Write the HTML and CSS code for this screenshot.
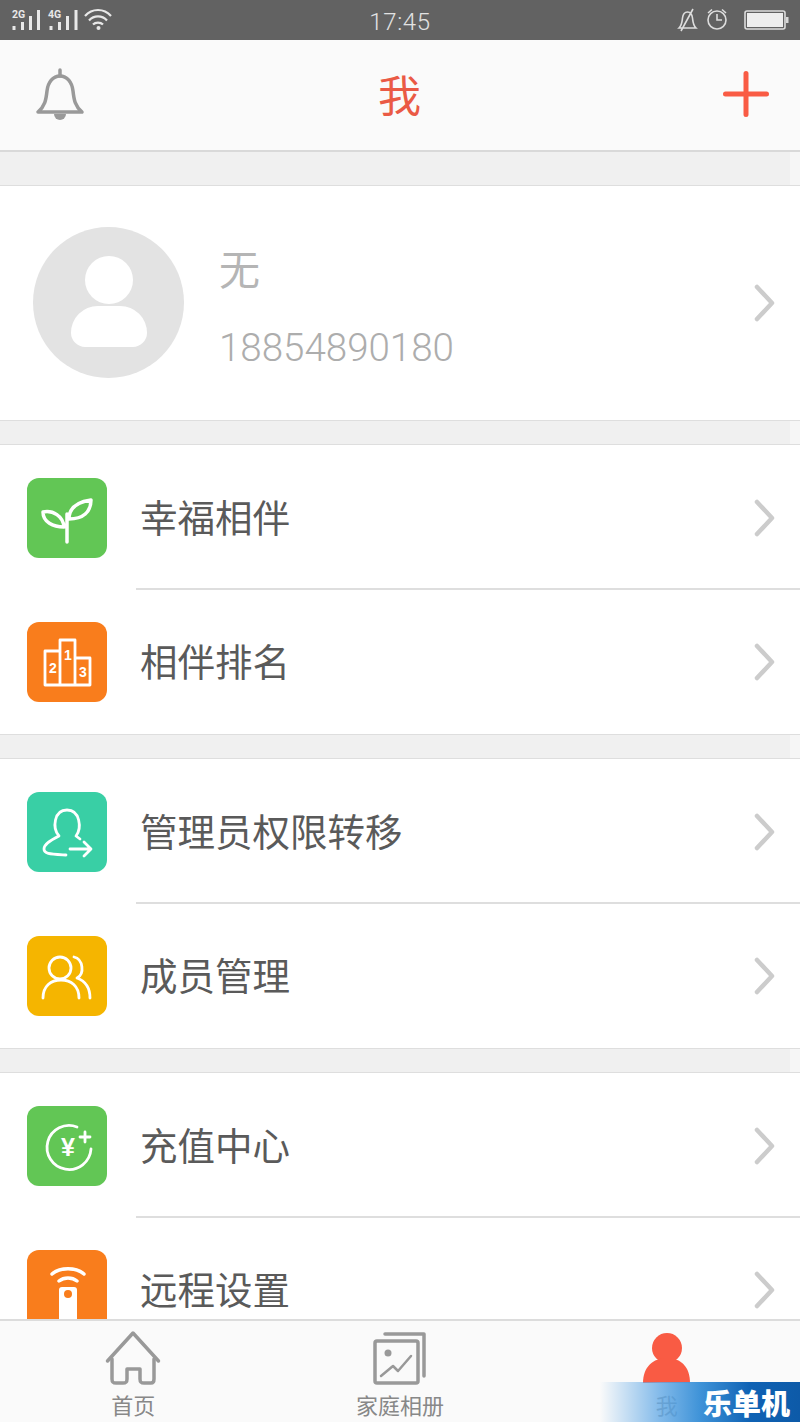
FILE: index.html
```html
<!DOCTYPE html>
<html>
<head>
    <title>我</title>
    <link rel="stylesheet" href="styles.css">
</head>
<body>
    <div class="status-bar">
        <div class="status-left">
            <svg width="116" height="40" viewBox="0 0 116 40">
                <text class="net" x="12" y="18">2G</text>
                <path class="bars" d="M14 26v4M22.500 22v8M30.500 16v14M38.500 10v20"/>
                <text class="net" x="48" y="18">4G</text>
                <path class="bars" d="M51 26v4M59.500 22v8M67.500 16v14M76 10v20"/>
                <path class="wifi" d="M86 17C93 9 105 9 112 17M90 21.500C95 16 103 16 108 21.500M94 25.500C96.500 23 101.500 23 104 25.500" transform="translate(-1 -1)"/>
                <circle cx="98.500" cy="28" r="2" fill="#e8e8e8"/>
            </svg>
        </div>
        <div class="status-time">17:45</div>
        <div class="status-right">
            <svg width="130" height="40" viewBox="0 0 130 40">
                <path class="thin" d="M9 28c3-3 3-6 3.500-10 .5-4 2.500-6 5-6s4.500 2 5 6c.5 4 .5 7 3.500 10zM11 31L23 9"/>
                <circle class="thin" cx="47" cy="20" r="9"/>
                <path class="thin" d="M47 14v6h5M38 13l4-3.500M56 13l-4-3.500"/>
                <rect class="thin" x="75" y="11" width="40" height="18" rx="2"/>
                <rect x="77" y="13" width="36" height="14" fill="#eeeeee"/>
                <rect x="116" y="17" width="2.500" height="6" fill="#d8d8d8"/>
            </svg>
        </div>
    </div>

    <div class="top-bar">
        <svg class="top-icon" width="60" height="60" viewBox="0 0 60 60">
            <path class="bell" d="M8 47c7-6 8-12 9-21 1-9 6-15 13-15s12 6 13 15c1 9 2 15 9 21z"/>
            <path class="bell" d="M30 5v6"/>
            <path class="bell-clap" d="M24 49a6 6 0 0 0 12 0z"/>
        </svg>
        <div class="top-title">我</div>
        <svg class="top-icon top-plus" width="60" height="60" viewBox="0 0 60 60">
            <path class="plus" d="M9.500 29h41M30 8.500v41"/>
        </svg>
    </div>

    <div class="content">
        <div class="gap"></div>

        <div class="section profile">
            <div class="avatar">
                <div class="avatar-head"></div>
                <div class="avatar-body"></div>
            </div>
            <div class="profile-info">
                <div class="profile-name">无</div>
                <div class="profile-phone">18854890180</div>
            </div>
            <svg class="chevron" width="24" height="40" viewBox="0 0 24 40"><path d="M4 4l15 16L4 36"/></svg>
        </div>

        <div class="gap"></div>

        <div class="section">
            <div class="row">
                <div class="tile green">
                    <svg width="80" height="80" viewBox="0 0 80 80">
                        <path class="line" d="M40 64V36M42 41C42 30 50 24 64 22C64 34 56 41 42 41ZM16 34C26 32 36 38 37 49C26 49 16 44 16 34Z"/>
                    </svg>
                </div>
                <div class="row-body">
                    <span class="row-label">幸福相伴</span>
                    <svg class="chevron" width="24" height="40" viewBox="0 0 24 40"><path d="M4 4l15 16L4 36"/></svg>
                </div>
            </div>
            <div class="row last">
                <div class="tile orange">
                    <svg width="80" height="80" viewBox="0 0 80 80">
                        <path class="line thin-line" d="M33 63V18H48V63ZM33 29H18V63H33M48 36H63V63H48"/>
                        <text class="podium-num" x="41" y="38">1</text>
                        <text class="podium-num" x="26" y="51">2</text>
                        <text class="podium-num" x="56" y="55">3</text>
                    </svg>
                </div>
                <div class="row-body">
                    <span class="row-label">相伴排名</span>
                    <svg class="chevron" width="24" height="40" viewBox="0 0 24 40"><path d="M4 4l15 16L4 36"/></svg>
                </div>
            </div>
        </div>

        <div class="gap"></div>

        <div class="section">
            <div class="row">
                <div class="tile teal">
                    <svg width="80" height="80" viewBox="0 0 80 80">
                        <path class="line thin-line" d="M53 47L49 44C55 36 53 18 40 18C27 18 25 36 32 44C24 48 17 52 17 57C17 62 23 62 39 63M43 57H63M57 50L64 57L57 64"/>
                    </svg>
                </div>
                <div class="row-body">
                    <span class="row-label">管理员权限转移</span>
                    <svg class="chevron" width="24" height="40" viewBox="0 0 24 40"><path d="M4 4l15 16L4 36"/></svg>
                </div>
            </div>
            <div class="row last">
                <div class="tile yellow">
                    <svg width="80" height="80" viewBox="0 0 80 80">
                        <circle class="line thin-line" cx="33" cy="32" r="11"/>
                        <path class="line thin-line" d="M16 62C16 50 24 44 34 44C44 44 52 50 52 62M47 21C56 23 58 38 50 42C58 45 63 52 63 62"/>
                    </svg>
                </div>
                <div class="row-body">
                    <span class="row-label">成员管理</span>
                    <svg class="chevron" width="24" height="40" viewBox="0 0 24 40"><path d="M4 4l15 16L4 36"/></svg>
                </div>
            </div>
        </div>

        <div class="gap"></div>

        <div class="section">
            <div class="row">
                <div class="tile green">
                    <svg width="80" height="80" viewBox="0 0 80 80">
                        <path class="line thin-line" d="M50 21A22 22 0 1 0 64 43"/>
                        <path class="line thin-line" d="M53 31H63M58 26V36"/>
                        <text class="yen" x="41" y="50">¥</text>
                    </svg>
                </div>
                <div class="row-body">
                    <span class="row-label">充值中心</span>
                    <svg class="chevron" width="24" height="40" viewBox="0 0 24 40"><path d="M4 4l15 16L4 36"/></svg>
                </div>
            </div>
            <div class="row last">
                <div class="tile orange">
                    <svg width="80" height="80" viewBox="0 0 80 80">
                        <path class="line" d="M25 24C33 17 49 17 57 24M32 31C37 27 45 27 50 31"/>
                        <rect x="32" y="37" width="18" height="50" rx="3" fill="#ffffff"/>
                        <circle cx="41" cy="44" r="4" fill="#f97d1c"/>
                    </svg>
                </div>
                <div class="row-body">
                    <span class="row-label">远程设置</span>
                    <svg class="chevron" width="24" height="40" viewBox="0 0 24 40"><path d="M4 4l15 16L4 36"/></svg>
                </div>
            </div>
        </div>
    </div>

    <div class="tab-bar">
        <div class="tab">
            <svg width="60" height="60" viewBox="0 0 60 60">
                <path class="tab-line" d="M4.500 32L30 4L55.500 32"/>
                <path class="tab-line" d="M9 30V50C9 53 10 54 13 54H20C23 54 24 53 24 50V40H37V50C37 53 38 54 41 54H48C50 54 51 53 51 50V30"/>
            </svg>
            <span class="tab-label">首页</span>
        </div>
        <div class="tab">
            <svg width="60" height="60" viewBox="0 0 60 60">
                <path class="tab-line" d="M15 5H54V47"/>
                <rect class="tab-line" x="5" y="12" width="43" height="42" rx="2"/>
                <circle cx="18" cy="24" r="3.500" fill="#999999"/>
                <path class="tab-line thin-tab" d="M11 47L23 37L28 42L41 27"/>
            </svg>
            <span class="tab-label">家庭相册</span>
        </div>
        <div class="tab">
            <svg width="60" height="60" viewBox="0 0 60 60">
                <circle cx="30" cy="19" r="15" fill="#f95b44"/>
                <path d="M6 54C6 38 16 29 30 29C44 29 53 38 53 54Z" fill="#f95b44"/>
            </svg>
            <span class="tab-label">我</span>
        </div>
        <div class="watermark">乐单机</div>
    </div>
</body>
</html>
```

FILE: styles.css
```css
html, body {
    margin: 0;
    padding: 0;
}

body {
    width: 800px;
    height: 1422px;
    overflow: hidden;
    display: flex;
    flex-direction: column;
    font-family: "Noto Sans CJK SC", "Noto Sans", sans-serif;
    background-color: #f0f0f0;
}

.status-bar {
    height: 40px;
    flex-shrink: 0;
    background-color: #626262;
    display: grid;
    grid-template-columns: 1fr auto 1fr;
    align-items: center;
}

.status-bar svg {
    display: block;
}

.status-right {
    display: flex;
    justify-content: flex-end;
}

.status-time {
    font-family: Roboto, sans-serif;
    font-size: 24px;
    font-weight: 300;
    padding-top: 3px;
    color: #e2e2e2;
    letter-spacing: 0.6px;
}

.net {
    font-family: Roboto, sans-serif;
    font-size: 10.500px;
    font-weight: 700;
    fill: #e8e8e8;
}

.bars {
    fill: none;
    stroke: #e8e8e8;
    stroke-width: 3;
}

.wifi {
    fill: none;
    stroke: #e8e8e8;
    stroke-width: 2.200;
}

.thin {
    fill: none;
    stroke: #dddddd;
    stroke-width: 1.600;
}

.top-bar {
    height: 110px;
    flex-shrink: 0;
    background-color: #fafafa;
    border-bottom: 2px solid #d9d9d9;
    display: grid;
    grid-template-columns: 1fr auto 1fr;
    align-items: center;
    padding: 0 24px 0 30px;
}

.top-plus {
    justify-self: end;
}

.top-title {
    font-size: 43px;
    line-height: 60px;
    margin: 0 0 4px -7px;
    color: #ea5a45;
}

.bell {
    fill: none;
    stroke: #999999;
    stroke-width: 3.500;
    stroke-linecap: round;
    stroke-linejoin: round;
}

.bell-clap {
    fill: #999999;
}

.plus {
    fill: none;
    stroke: #f95b44;
    stroke-width: 5;
    stroke-linecap: round;
}

.content {
    flex: 1;
    min-height: 0;
    overflow: hidden;
}

.gap {
    height: 23px;
    background: linear-gradient(to right, #f0f0f0 790px, #f6f6f6 790px);
}

.gap:first-child {
    height: 33px;
}

.section {
    background-color: #ffffff;
    border-top: 1px solid #dedede;
    border-bottom: 1px solid #dedede;
}

.profile {
    height: 234px;
    display: flex;
    align-items: center;
    padding: 0 23px 0 33px;
}

.avatar {
    width: 151px;
    height: 151px;
    margin-bottom: 1px;
    border-radius: 50%;
    background-color: #e3e3e3;
    display: flex;
    flex-direction: column;
    align-items: center;
    flex-shrink: 0;
}

.avatar-head {
    width: 48px;
    height: 48px;
    margin-top: 29px;
    border-radius: 50%;
    background-color: #ffffff;
}

.avatar-body {
    width: 76px;
    height: 41px;
    margin-top: 2px;
    border-radius: 38px 38px 20px 20px;
    background-color: #ffffff;
}

.profile-info {
    flex: 1;
    margin-left: 35px;
    padding-top: 4px;
}

.profile-name {
    font-size: 41px;
    line-height: 56px;
    color: #b5b5b5;
}

.profile-phone {
    font-family: Roboto, sans-serif;
    font-size: 38.500px;
    font-weight: 300;
    line-height: 46px;
    margin-top: 30px;
    color: #adadad;
}

.row {
    height: 145px;
    display: flex;
}

.row.last {
    height: 144px;
}

.tile {
    width: 80px;
    height: 80px;
    margin: 33px 29px 0 27px;
    border-radius: 12px;
    flex-shrink: 0;
}

.row.last .tile {
    margin-top: 32px;
}

.tile svg {
    display: block;
}

.green {
    background-color: #62c655;
}

.orange {
    background-color: #f97d1c;
}

.teal {
    background-color: #39cfa5;
}

.yellow {
    background-color: #f5b500;
}

.row-body {
    flex: 1;
    display: flex;
    align-items: center;
    justify-content: space-between;
    padding: 3px 23px 0 4px;
    border-bottom: 2px solid #dedede;
}

.row.last .row-body {
    padding-top: 0;
    border-bottom: none;
}

.row-label {
    font-size: 37.500px;
    line-height: 50px;
    margin-bottom: 4px;
    color: #5a5a5a;
}

.chevron {
    display: block;
    flex-shrink: 0;
}

.chevron path {
    fill: none;
    stroke: #cccccc;
    stroke-width: 4.500;
    stroke-linecap: round;
    stroke-linejoin: round;
}

.line {
    fill: none;
    stroke: #ffffff;
    stroke-width: 3.500;
    stroke-linecap: round;
    stroke-linejoin: round;
}

.thin-line {
    stroke-width: 2.800;
}

.podium-num {
    font-family: "Liberation Sans", sans-serif;
    font-size: 14px;
    font-weight: 700;
    text-anchor: middle;
    fill: #ffffff;
}

.yen {
    font-family: "Liberation Sans", sans-serif;
    font-size: 25px;
    font-weight: 700;
    text-anchor: middle;
    fill: #ffffff;
}

.tab-bar {
    position: relative;
    height: 101px;
    flex-shrink: 0;
    background-color: #fafafa;
    border-top: 2px solid #dcdcdc;
    display: grid;
    grid-template-columns: repeat(3, 1fr);
}

.tab {
    display: flex;
    flex-direction: column;
    align-items: center;
    padding-top: 8px;
}

.tab svg {
    display: block;
}

.tab-label {
    font-size: 22px;
    line-height: 30px;
    color: #888888;
}

.tab-line {
    fill: none;
    stroke: #999999;
    stroke-width: 3.500;
    stroke-linecap: round;
    stroke-linejoin: round;
}

.thin-tab {
    stroke-width: 2.500;
}

.watermark {
    position: absolute;
    right: 0;
    bottom: 0;
    width: 200px;
    height: 40px;
    box-sizing: border-box;
    padding-right: 10px;
    text-align: right;
    font-size: 29px;
    font-weight: 900;
    line-height: 40px;
    color: #ffffff;
    background: linear-gradient(to right, rgba(120, 185, 235, 0), rgba(100, 170, 230, 0.8) 30%, #3f93d8 50%, #0f62b4 75%, #0d5aa8);
}
```
